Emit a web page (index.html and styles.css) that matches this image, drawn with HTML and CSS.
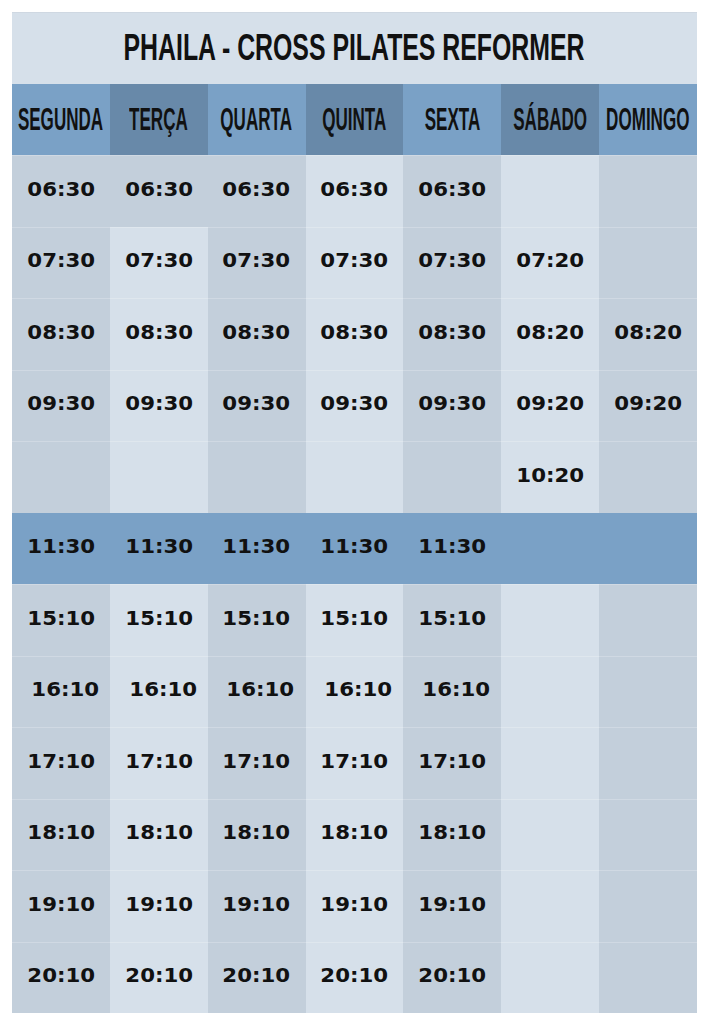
FILE: index.html
```html
<!DOCTYPE html>
<html lang="pt">
<head>
<meta charset="utf-8">
<title>Phaila - Cross Pilates Reformer</title>
<link rel="stylesheet" href="styles.css">
</head>
<body>
<main class="card">
  <h1 class="title"><span>PHAILA - CROSS PILATES REFORMER</span></h1>

  <div class="day hl"><span>SEGUNDA</span></div>
  <div class="day hd"><span>TERÇA</span></div>
  <div class="day hl"><span>QUARTA</span></div>
  <div class="day hd"><span>QUINTA</span></div>
  <div class="day hl"><span>SEXTA</span></div>
  <div class="day hd"><span>SÁBADO</span></div>
  <div class="day hl"><span>DOMINGO</span></div>

  <div class="cell g"><span>06:30</span></div>
  <div class="cell g"><span>06:30</span></div>
  <div class="cell g"><span>06:30</span></div>
  <div class="cell l"><span>06:30</span></div>
  <div class="cell g"><span>06:30</span></div>
  <div class="cell l"></div>
  <div class="cell g"></div>

  <div class="cell g"><span>07:30</span></div>
  <div class="cell l"><span>07:30</span></div>
  <div class="cell g"><span>07:30</span></div>
  <div class="cell l"><span>07:30</span></div>
  <div class="cell g"><span>07:30</span></div>
  <div class="cell l"><span>07:20</span></div>
  <div class="cell g"></div>

  <div class="cell g"><span>08:30</span></div>
  <div class="cell l"><span>08:30</span></div>
  <div class="cell g"><span>08:30</span></div>
  <div class="cell l"><span>08:30</span></div>
  <div class="cell g"><span>08:30</span></div>
  <div class="cell l"><span>08:20</span></div>
  <div class="cell g"><span>08:20</span></div>

  <div class="cell g"><span>09:30</span></div>
  <div class="cell l"><span>09:30</span></div>
  <div class="cell g"><span>09:30</span></div>
  <div class="cell l"><span>09:30</span></div>
  <div class="cell g"><span>09:30</span></div>
  <div class="cell l"><span>09:20</span></div>
  <div class="cell g"><span>09:20</span></div>

  <div class="cell g"></div>
  <div class="cell l"></div>
  <div class="cell g"></div>
  <div class="cell l"></div>
  <div class="cell g"></div>
  <div class="cell l"><span>10:20</span></div>
  <div class="cell g"></div>

  <div class="cell b"><span>11:30</span></div>
  <div class="cell b"><span>11:30</span></div>
  <div class="cell b"><span>11:30</span></div>
  <div class="cell b"><span>11:30</span></div>
  <div class="cell b"><span>11:30</span></div>
  <div class="cell b"></div>
  <div class="cell b"></div>

  <div class="cell g"><span>15:10</span></div>
  <div class="cell l"><span>15:10</span></div>
  <div class="cell g"><span>15:10</span></div>
  <div class="cell l"><span>15:10</span></div>
  <div class="cell g"><span>15:10</span></div>
  <div class="cell l"></div>
  <div class="cell g"></div>

  <div class="cell g shift"><span>16:10</span></div>
  <div class="cell l shift"><span>16:10</span></div>
  <div class="cell g shift"><span>16:10</span></div>
  <div class="cell l shift"><span>16:10</span></div>
  <div class="cell g shift"><span>16:10</span></div>
  <div class="cell l"></div>
  <div class="cell g"></div>

  <div class="cell g"><span>17:10</span></div>
  <div class="cell l"><span>17:10</span></div>
  <div class="cell g"><span>17:10</span></div>
  <div class="cell l"><span>17:10</span></div>
  <div class="cell g"><span>17:10</span></div>
  <div class="cell l"></div>
  <div class="cell g"></div>

  <div class="cell g"><span>18:10</span></div>
  <div class="cell l"><span>18:10</span></div>
  <div class="cell g"><span>18:10</span></div>
  <div class="cell l"><span>18:10</span></div>
  <div class="cell g"><span>18:10</span></div>
  <div class="cell l"></div>
  <div class="cell g"></div>

  <div class="cell g"><span>19:10</span></div>
  <div class="cell l"><span>19:10</span></div>
  <div class="cell g"><span>19:10</span></div>
  <div class="cell l"><span>19:10</span></div>
  <div class="cell g"><span>19:10</span></div>
  <div class="cell l"></div>
  <div class="cell g"></div>

  <div class="cell g"><span>20:10</span></div>
  <div class="cell l"><span>20:10</span></div>
  <div class="cell g"><span>20:10</span></div>
  <div class="cell l"><span>20:10</span></div>
  <div class="cell g"><span>20:10</span></div>
  <div class="cell l"></div>
  <div class="cell g"></div>
</main>
</body>
</html>
```

FILE: styles.css
```css
* { box-sizing: border-box; }

html, body {
  margin: 0;
  padding: 0;
  background: #ffffff;
}

body {
  padding: 12px;
  font-family: "Liberation Sans", Arial, sans-serif;
  color: #111111;
}

.card {
  width: 685px;
  display: grid;
  grid-template-columns: repeat(7, minmax(0, 1fr));
  grid-auto-rows: 71.5px;
  background: #d6e0ea;
}

.title {
  grid-column: 1 / -1;
  min-width: 0;
  margin: 0;
  display: flex;
  align-items: center;
  justify-content: center;
  background: #d6e0ea;
  font-family: "Liberation Sans", Arial, sans-serif;
  font-weight: 700;
  font-size: 36px;
  line-height: 1;
  color: #111111;
  border-top: 1px solid #cfd8e2;
}

.title span {
  flex: none;
  display: inline-block;
  white-space: nowrap;
  transform: scaleX(0.69);
}

.day {
  min-width: 0;
  display: flex;
  align-items: center;
  justify-content: center;
  font-family: "Liberation Sans", Arial, sans-serif;
  font-weight: 700;
  font-size: 31px;
  line-height: 1;
  color: #111111;
}

.day span {
  flex: none;
  display: inline-block;
  white-space: nowrap;
  transform: scaleX(0.55);
}

.hl { background: #7aa1c6; }
.hd { background: #6889a9; }

.cell {
  min-width: 0;
  display: flex;
  align-items: center;
  justify-content: center;
  padding-bottom: 3px;
  font-family: "DejaVu Sans", sans-serif;
  font-weight: 700;
  font-size: 19px;
  line-height: 1;
  color: #111111;
  box-shadow: inset 0 1px 0 rgba(255, 255, 255, 0.22);
}

.cell span {
  flex: none;
  display: inline-block;
  white-space: nowrap;
  transform: scaleX(1.12);
}

.cell.shift { padding-left: 8px; }

.g { background: #c3cfdb; }
.l { background: #d6e0ea; }
.b { background: #7aa1c6; box-shadow: none; }
```
